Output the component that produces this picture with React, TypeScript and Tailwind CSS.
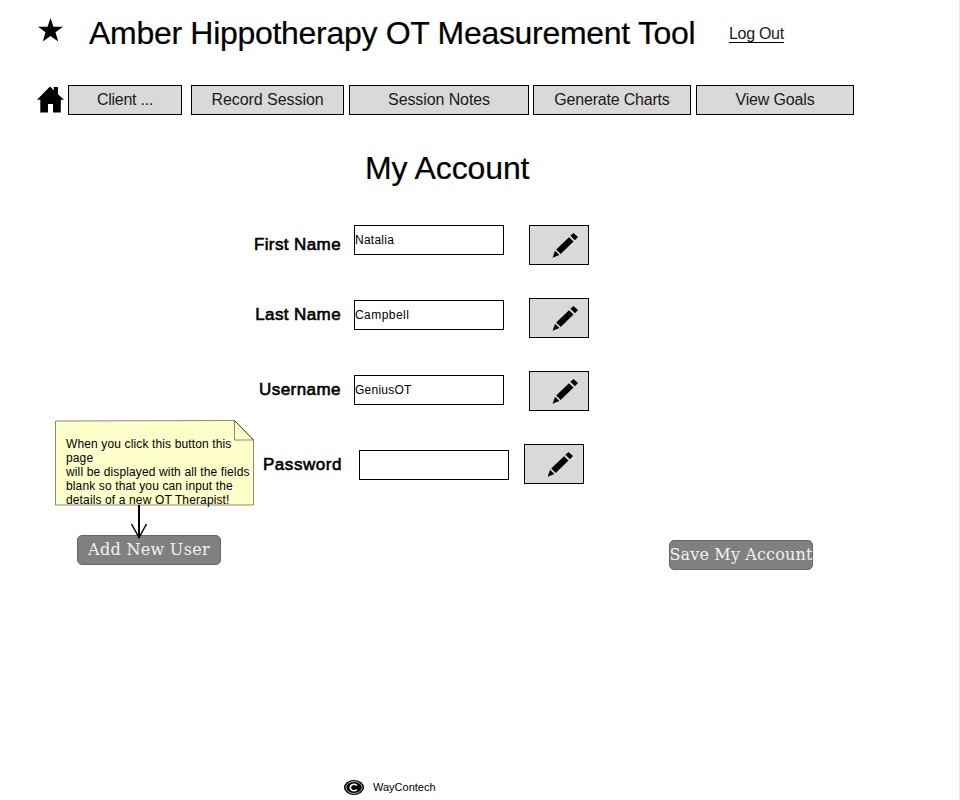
const NAV = [
  { label: "Client ...", box: "w-[114px] mr-[9px]", text: "tracking-[-0.25px]" },
  { label: "Record Session", box: "w-[153px] mr-[5px]", text: "tracking-[-0.05px]" },
  { label: "Session Notes", box: "w-[180px] mr-1", text: "tracking-[-0.1px]" },
  { label: "Generate Charts", box: "w-[158px] mr-[5px]", text: "tracking-[-0.2px]" },
  { label: "View Goals", box: "w-[158px]", text: "tracking-[-0.15px]" },
];

const FIELDS = [
  { label: "First Name", value: "Natalia", labelBox: "mb-[50px] tracking-[0.4px]", inputBox: "tracking-[0.25px]", buttonBox: "" },
  { label: "Last Name", value: "Campbell", labelBox: "mb-[55px] tracking-[0.4px]", inputBox: "tracking-[0.45px]", buttonBox: "" },
  { label: "Username", value: "GeniusOT", labelBox: "mb-[55px] tracking-[0.45px]", inputBox: "tracking-[0.25px]", buttonBox: "" },
  { label: "Password", value: "", labelBox: "-mr-px tracking-[0.55px]", inputBox: "ml-[5px]", buttonBox: "-ml-[5px]" },
];

function Pencil() {
  return (
    <svg width="26" height="26" viewBox="0 0 26 26" className="ml-[22px] mt-[6px]">
      <path d="M.6 25.8 3 18.8 7.4 23Z" />
      <path d="M4.2 17.4 17 5.2 21.5 9.4 8.7 21.9Z" />
      <path d="M18.4 3.8 21.4.9 26 5.1 22.9 8.2Z" />
    </svg>
  );
}

export default function App() {
  return (
    <div className="flex h-[800px] w-[960px] flex-col overflow-hidden border-r border-[#ececec] bg-white font-['Liberation_Sans',Arial,sans-serif] text-black">
      <header className="flex h-[85px] shrink-0 items-start pl-[37px]">
        <svg width="27" height="26" viewBox="0 0 27 26" className="mt-[17px]">
          <path d="M13.5 1 16.5 9.8H26L18.5 15.3 21.2 24.4 13.5 19 5.8 24.4 8.5 15.3 1 9.8H10.5Z" />
        </svg>
        <h1 className="ml-[25px] mt-[14px] w-[640px] whitespace-nowrap text-[32px] leading-[38px] tracking-[-0.3px] [-webkit-text-stroke:0.2px]">
          Amber Hippotherapy OT Measurement Tool
        </h1>
        <a className="mt-[25px] h-[18px] whitespace-nowrap border-b border-black text-base leading-[18px] tracking-[-0.3px] text-[#1a1a1a]">Log Out</a>
      </header>

      <nav className="flex h-[30px] shrink-0 pl-[36px]">
        <svg width="29" height="30" viewBox="0 0 29 30" className="mr-[3px]">
          <path d="M1 14.8 14 1.5 17.8 5.2V2H22V9.2L28 14.8H24.8V27.5H17V19H12V27.5H4.3V14.8Z" />
        </svg>
        {NAV.map((n) => (
          <button key={n.label} className={`h-[30px] shrink-0 whitespace-nowrap border border-black bg-[#d9d9d9] text-base leading-7 text-[#1a1a1a] ${n.box} ${n.text}`}>
            {n.label}
          </button>
        ))}
      </nav>

      <h2 className="mt-[34px] h-[38px] shrink-0 pl-[365px] text-[32px] leading-[38px] tracking-[-0.1px] [-webkit-text-stroke:0.2px]">My Account</h2>

      <main className="mt-[38px] flex h-[350px] shrink-0">
        <div className="flex w-[254px] shrink-0 flex-col pl-[55px] pt-[195px]">
          <div className="relative h-[86px] w-[199px] pl-[11px] pt-[17px]">
            <svg width="199" height="86" viewBox="0 0 199 86" className="absolute left-0 top-0" fill="#ffffcc" stroke="#8b8b70">
              <path d="M.5 1 179.5.5 198.5 20V85H.5Z" />
              <path d="M179.5.5V20H198.5" />
              <path d="M179.5.5 198.5 20" stroke="#333" />
            </svg>
            <p className="relative whitespace-pre text-xs leading-[14px] tracking-[0.13px]">
              {"When you click this button this\npage\nwill be displayed with all the fields\nblank so that you can input the\ndetails of a new OT Therapist!"}
            </p>
          </div>
          <svg width="18" height="34" viewBox="0 0 18 34" className="relative -mb-[4px] -mt-px ml-[75px]" fill="none" stroke="#000">
            <path d="M9 0V33" strokeWidth="2" />
            <path d="M1.5 19 9 32.5 16.5 19" strokeWidth="1.5" />
          </svg>
          <button className="ml-[22px] h-[30px] w-36 whitespace-nowrap rounded-[5px] border border-[#666] bg-[#808080] font-['DejaVu_Serif',serif] text-base leading-7 tracking-[0.3px] text-[#f2f2f2]">
            Add New User
          </button>
        </div>
        <div className="flex w-[87px] shrink-0 flex-col items-end pt-[10px]">
          {FIELDS.map((f) => (
            <label key={f.label} className={`h-5 shrink-0 whitespace-nowrap text-[17px] leading-5 [-webkit-text-stroke:0.6px] ${f.labelBox}`}>{f.label}</label>
          ))}
        </div>
        <div className="ml-[13px] flex w-[150px] shrink-0 flex-col gap-[45px]">
          {FIELDS.map((f) => (
            <div key={f.label} className={`h-[30px] w-[150px] border border-black text-xs leading-7 ${f.inputBox}`}>{f.value}</div>
          ))}
        </div>
        <div className="ml-[25px] flex w-[60px] shrink-0 flex-col gap-[33px]">
          {FIELDS.map((f) => (
            <button key={f.label} aria-label={`Edit ${f.label}`} className={`flex h-10 w-[60px] border border-black bg-[#d9d9d9] ${f.buttonBox}`}>
              <Pencil />
            </button>
          ))}
        </div>
        <button className="ml-20 mt-[315px] flex h-[30px] w-36 shrink-0 justify-center whitespace-nowrap rounded-[5px] border border-[#666] bg-[#808080] font-['DejaVu_Serif',serif] text-base leading-7 tracking-[0.15px] text-[#f2f2f2]">
          Save My Account
        </button>
      </main>

      <footer className="mt-auto flex h-[22px] shrink-0 items-start pl-[344px]">
        <svg width="20" height="16" viewBox="0 0 20 16" className="mt-[2px]">
          <ellipse cx="10" cy="7.5" rx="10" ry="7.5" />
          <ellipse cx="10" cy="7.5" rx="8" ry="6" fill="none" stroke="#fff" strokeWidth="0.7" />
          <path d="M12.9 5.5A3.7 3.2 0 1 0 12.9 9.5" fill="none" stroke="#fff" strokeWidth="1.7" />
        </svg>
        <span className="ml-[9px] mt-[2px] text-[11px] leading-[14px]">WayContech</span>
      </footer>
    </div>
  );
}
